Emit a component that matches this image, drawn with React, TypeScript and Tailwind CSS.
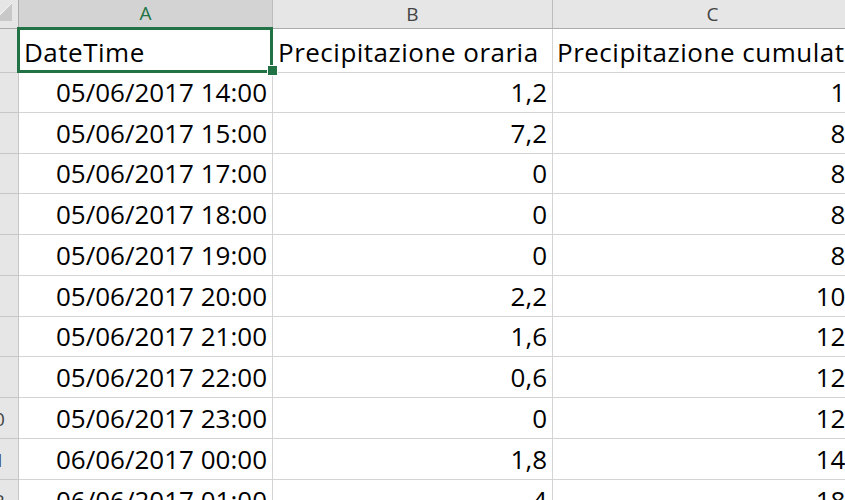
import React from "react";

const rows: [string, string, string][] = [
  ["05/06/2017 14:00", "1,2", "1,2"],
  ["05/06/2017 15:00", "7,2", "8,4"],
  ["05/06/2017 17:00", "0", "8,4"],
  ["05/06/2017 18:00", "0", "8,4"],
  ["05/06/2017 19:00", "0", "8,4"],
  ["05/06/2017 20:00", "2,2", "10,6"],
  ["05/06/2017 21:00", "1,6", "12,2"],
  ["05/06/2017 22:00", "0,6", "12,8"],
  ["05/06/2017 23:00", "0", "12,8"],
  ["06/06/2017 00:00", "1,8", "14,6"],
  ["06/06/2017 01:00", "4", "18,6"],
];

const heights = [40, 41, 40, 41, 41, 41, 40, 41, 41, 41, 41];

function RowHead({ n }: { n: number }) {
  return (
    <div className="w-[19px] shrink-0 overflow-hidden border-r border-b border-[#c6c6c6] bg-[#e6e6e6]">
      <div className="ml-[-29px] flex h-full w-[46px] items-center justify-center pt-[3px] text-[19px] leading-none text-[#444]">
        {n}
      </div>
    </div>
  );
}

export default function App() {
  return (
    <div
      className="relative h-[500px] w-[845px] overflow-hidden bg-white text-black"
      style={{ fontFamily: "'Open Sans', Lato, sans-serif" }}
    >
      {/* column headers */}
      <div className="flex h-[29px]">
        <div className="relative w-[19px] shrink-0 overflow-hidden border-r border-b border-[#ababab] bg-[#e6e6e6]">
          <svg className="absolute left-0 top-0" width="18" height="28" viewBox="0 0 18 28">
            <polygon points="-6,21 12,21 12,3" fill="#c8c8c8" />
            <line x1="-6" y1="21" x2="12" y2="3" stroke="#f2f2f2" strokeWidth="1" />
          </svg>
        </div>
        <div className="flex w-[254px] shrink-0 items-center justify-center border-r border-b-2 border-r-[#bcbcbc] border-b-[#217346] bg-[#d3d3d3] text-[19px] leading-none text-[#217346]">
          A
        </div>
        <div className="flex w-[280px] shrink-0 items-center justify-center border-r border-b border-r-[#bcbcbc] border-b-[#ababab] bg-[#e6e6e6] text-[19px] leading-none text-[#444]">
          B
        </div>
        <div className="flex w-[320px] shrink-0 items-center justify-center border-r border-b border-r-[#bcbcbc] border-b-[#ababab] bg-[#e6e6e6] text-[19px] leading-none text-[#444]">
          C
        </div>
      </div>

      {/* header data row */}
      <div className="flex h-[44px]">
        <RowHead n={1} />
        <div className="flex w-[254px] shrink-0 items-end border-r border-b border-[#d4d4d4] pb-[7px] pl-[5px] text-[26px] leading-[26px] tracking-[0.5px]">
          DateTime
        </div>
        <div className="flex w-[280px] shrink-0 items-end whitespace-nowrap border-r border-b border-[#d4d4d4] pb-[7px] pl-[5px] text-[26px] leading-[26px] tracking-[0.5px]">
          Precipitazione oraria
        </div>
        <div className="flex w-[320px] shrink-0 items-end overflow-hidden whitespace-nowrap border-r border-b border-[#d4d4d4] pb-[7px] pl-[4px] text-[26px] leading-[26px] tracking-[0.5px]">
          Precipitazione cumulata
        </div>
      </div>

      {rows.map((r, i) => (
        <div key={i} className="flex" style={{ height: heights[i] }}>
          <RowHead n={i + 2} />
          <div className="flex w-[254px] shrink-0 items-end justify-end whitespace-nowrap border-r border-b border-[#d4d4d4] pb-[7px] pr-[5px] text-[26px] leading-[26px]">
            {r[0]}
          </div>
          <div className="flex w-[280px] shrink-0 items-end justify-end border-r border-b border-[#d4d4d4] pb-[7px] pr-[5px] text-[26px] leading-[26px]">
            {r[1]}
          </div>
          <div className="flex w-[320px] shrink-0 items-end justify-end border-r border-b border-[#d4d4d4] pb-[7px] pr-[5px] text-[26px] leading-[26px]">
            {r[2]}
          </div>
        </div>
      ))}

      {/* selection rectangle */}
      <div className="pointer-events-none absolute left-[17px] top-[27px] h-[46px] w-[256px] border-[3px] border-[#217346]" />
      <div className="pointer-events-none absolute left-[267px] top-[65px] h-[11px] w-[11px] border border-white bg-[#217346]" />
    </div>
  );
}
